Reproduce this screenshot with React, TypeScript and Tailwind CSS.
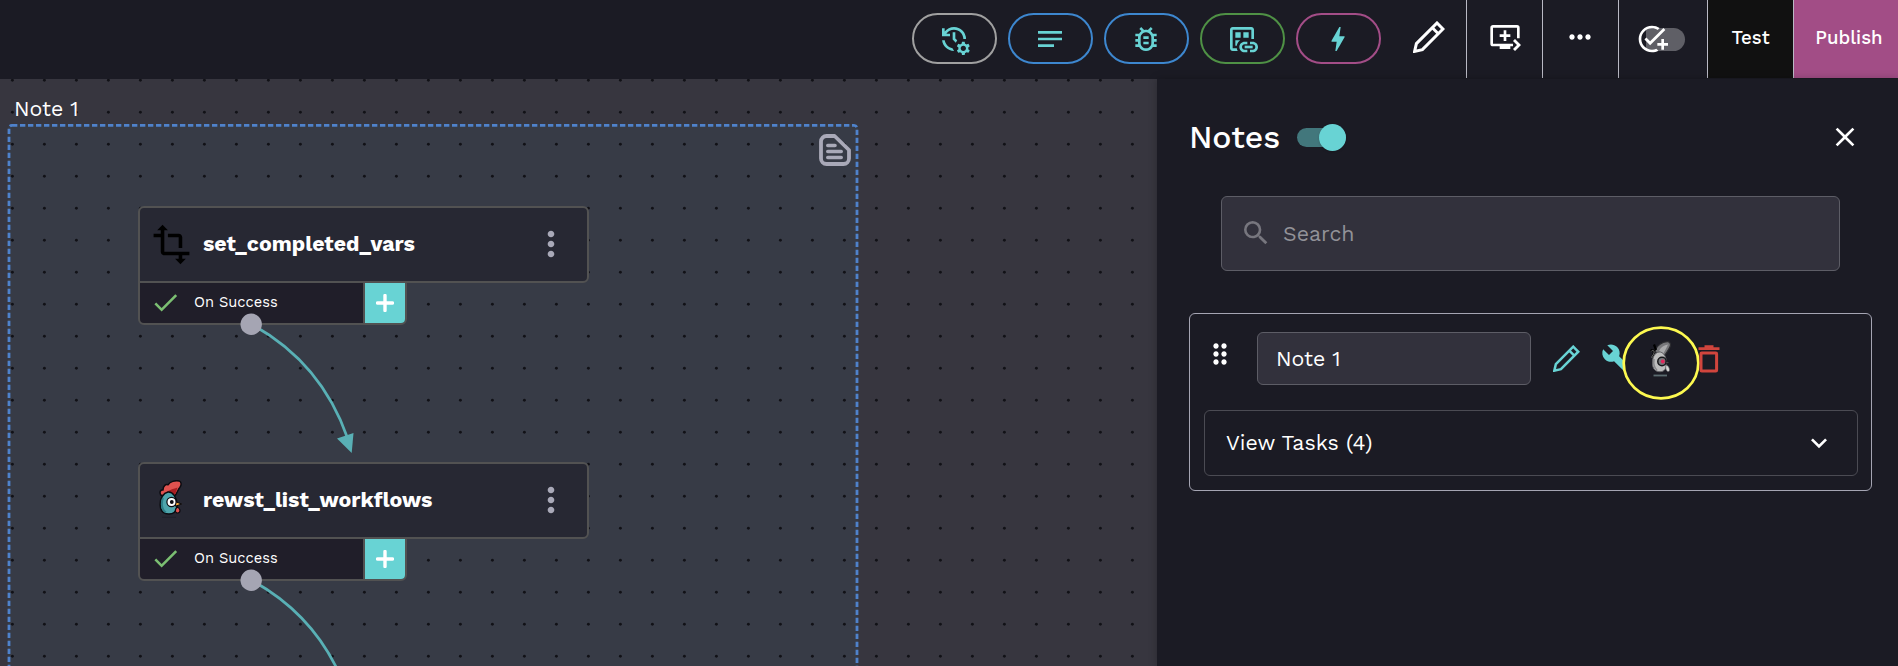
import type { ReactNode } from "react";
import {
  MdBolt,
  MdBuild,
  MdCheck,
  MdClose,
  MdDragIndicator,
  MdExpandMore,
  MdManageHistory,
  MdMoreHoriz,
  MdMoreVert,
  MdNotes,
  MdOutlineAddTask,
  MdOutlineBugReport,
  MdOutlineDatasetLinked,
  MdQueuePlayNext,
  MdSearch,
  MdTransform,
} from "react-icons/md";

function PencilIcon({ className }: { className: string }) {
  return (
    <svg viewBox="0 0 32 32" className={className} fill="none" stroke="currentColor" strokeWidth="3" strokeLinejoin="miter">
      <path d="M1.6 30.4 3.4 22.6 24 2 30 8 9.4 28.6Z" />
      <path d="m19.3 6.7 6 6" />
    </svg>
  );
}

function TrashIcon({ className }: { className: string }) {
  return (
    <svg viewBox="0 0 22 28" className={className} fill="none" stroke="currentColor">
      <path d="M0.5 3.7h21M6.5 1.7h9" strokeWidth="2.8" />
      <rect x="3" y="8" width="15.6" height="18" rx="0.8" strokeWidth="3" />
    </svg>
  );
}

function NoteIcon({ className }: { className: string }) {
  return (
    <svg viewBox="0 0 32 32" className={className} fill="none" stroke="currentColor" strokeWidth="3.8" strokeLinecap="round">
      <path d="M7.5 2H15.6L30 16V24.5a5.5 5.5 0 0 1-5.5 5.5H7.5A5.5 5.5 0 0 1 2 24.5v-17A5.5 5.5 0 0 1 7.5 2Z" strokeLinejoin="round" />
      <path d="M8.8 11.5h7.2M8.8 17.5h13.4M8.8 23.5h13.4" strokeWidth="3.6" />
    </svg>
  );
}

function RoosterIcon({ className }: { className: string }) {
  return (
    <svg viewBox="0 0 24 38" className={className} strokeLinejoin="round">
      <path d="M1.7 15C0 11.500 2 9.500 4 10c0-4 2.500-6 5-5.200C11 1.500 16 .2 20 .9c2.800.8 2.600 4.500.8 6.600C19 9.500 18.500 12 16.500 15L10 17.500Z" fill="#e0524f" stroke="#0b0b10" strokeWidth="1.500" />
      <path d="M7 13c2-3 6-3.500 11.500-5.500C17.500 10.500 17 13 15.500 15Z" fill="#a81f22" />
      <path d="M9 12c-4.500 1-8 6-7.800 13 .2 6 3.800 9 8.800 9 5 0 8-3 8-9 0-7-4-13.500-9-13Z" fill="#4ea5ac" stroke="#0b0b10" strokeWidth="1.500" />
      <path d="M4 18c-2 5-1.500 12 3 14.500" stroke="#2f7f88" strokeWidth="2" fill="none" />
      <path d="M16 21.500 22.700 24l-6.200 2.200Z" fill="#f0a63a" stroke="#0b0b10" strokeWidth="1" />
      <path d="M18.300 27c3 1.200 3.800 5.500.7 6-3.200.3-3.400-3.800-.7-6Z" fill="#e0524f" stroke="#0b0b10" strokeWidth="1.200" />
      <circle cx="12.500" cy="22" r="4.600" fill="#fff" stroke="#0b0b10" strokeWidth="1.200" />
      <circle cx="12.800" cy="22" r="1.900" fill="#0b0b10" />
      <path d="M3 37.300h14" stroke="#20202b" strokeWidth="1" />
    </svg>
  );
}

function GreyRoosterIcon({ className }: { className: string }) {
  return (
    <svg viewBox="0 0 22 37" className={className} strokeLinejoin="round">
      <path d="M5 11C6 4 13 .5 18 .7c3 .5 3 4 1.500 6C18 9.500 17 11 15 14Z" fill="#77777a" stroke="#2c2c30" strokeWidth="1.200" />
      <path d="M9 10c2-4 5-6 9-6.500-1.500 3.500-3 6-4.500 9Z" fill="#a9a9ab" />
      <path d="M4 3.500 6 9M1 10c1-1.500 3-1 3 1s-2 3-1 6" fill="none" stroke="#000" strokeWidth="2.200" />
      <path d="M1.500 10c1.500-1.500 3 0 2.500 2S1.500 14.500 2 17" fill="none" stroke="#8b8b8e" strokeWidth=".8" />
      <path d="M9 11c-4.500 1-6.500 5-6.500 11 0 6 3 8.700 7.500 8.700 4.300 0 6.500-3 6.500-8.500C16.500 16 13.500 10.500 9 11Z" fill="#bdbdbe" stroke="#66666a" strokeWidth="1" />
      <path d="M4 18c-.8 5 .5 9 3 11" fill="none" stroke="#88888b" strokeWidth="1.600" />
      <path d="M16 24c3 .5 4.500 5.500 2.800 6.500-2.500.5-3.500-3-2.800-6.500Z" fill="#d7d7d7" stroke="#55555a" strokeWidth=".6" />
      <circle cx="12" cy="20.500" r="4.200" fill="#77777b" stroke="#17171b" strokeWidth="1.500" />
      <circle cx="12.800" cy="20.500" r="1.900" fill="#e3265c" />
      <path d="M16 20.300 20 21.500l-4 1.500Z" fill="#55555a" stroke="#17171b" strokeWidth=".7" />
      <path d="M3.500 34.500h13.500" stroke="#5b6b70" strokeWidth="1.800" />
    </svg>
  );
}

function Pill({ border, children }: { border: string; children: ReactNode }) {
  return (
    <button className={`flex h-[51px] w-[85px] items-center justify-center rounded-full border-2 pr-px text-[32px] text-[#68d3d4] ${border}`}>
      {children}
    </button>
  );
}

function TopBar() {
  return (
    <header className="flex h-[79px] shrink-0 items-start justify-end">
      <div className="flex gap-[11px] pt-[13px] pr-[19px]">
        <Pill border="border-[#a0a0a0]"><MdManageHistory /></Pill>
        <Pill border="border-[#3d87cf]"><MdNotes /></Pill>
        <Pill border="border-[#3d87cf]"><MdOutlineBugReport /></Pill>
        <Pill border="border-[#4f9145]"><MdOutlineDatasetLinked /></Pill>
        <Pill border="border-[#a34d87]"><MdBolt /></Pill>
      </div>
      <div className="flex h-[78px] text-[32px] text-white">
        <button className="flex w-[66px] items-center pb-[4px] pl-[13px]">
          <PencilIcon className="size-8" />
        </button>
        <button className="flex w-[76px] items-center border-l border-[#b9b9c4] pb-[4px] pl-[22px]">
          <MdQueuePlayNext />
        </button>
        <button className="flex w-[76px] items-center justify-center border-l border-[#b9b9c4] pr-[2px] pb-[4px]">
          <MdMoreHoriz />
        </button>
        <div className="flex w-[89px] items-center border-l border-[#b9b9c4] pl-[17px]">
          <div className="flex h-[23px] w-[49px] items-center rounded-full bg-linear-to-r from-transparent from-20% to-[#5f5f66] to-20%">
            <MdOutlineAddTask className="shrink-0" />
          </div>
        </div>
        <button className="w-[86px] border-l border-[#b9b9c4] bg-[#111111] pb-[2px] text-[18.670px] font-medium">
          Test
        </button>
        <button className="w-[105px] border-l border-[#b9b9c4] bg-[#a24d86] pb-[2px] pl-[6px] text-[18.670px] font-medium">
          Publish
        </button>
      </div>
    </header>
  );
}

function TaskNode({ place, icon, name }: { place: string; icon: ReactNode; name: string }) {
  return (
    <div className={`absolute left-[138px] w-[451px] ${place}`}>
      <div className="relative flex h-[77px] items-center rounded-md rounded-bl-none border-2 border-[#525252] bg-[#272833]">
        <div className="flex w-[63px] items-center pb-px pl-[10px]">{icon}</div>
        <div className="flex-1 pb-[2px] text-[21.330px] font-bold text-white">{name}</div>
        <MdMoreVert className="mr-[16px] mb-px text-[40px] text-[#a9a9b8]" />
      </div>
      <div className="relative -mt-[2px] flex h-[44px] w-[269px] overflow-hidden rounded-b-md border-2 border-[#525252] bg-[#201e29]">
        <div className="flex flex-1 items-center pb-px">
          <MdCheck className="ml-[10px] text-[31px] text-[#7bbf72]" />
          <span className="ml-[13px] pb-px text-[14.670px] text-white">On Success</span>
        </div>
        <div className="flex w-[42px] items-center justify-center border-l-2 border-[#525252] bg-[#68d3d4]">
          <svg viewBox="0 0 18 18" className="size-[18px]" stroke="#fff" strokeWidth="3.400" strokeLinecap="round">
            <path d="M9 1.500v15M1.500 9h15" />
          </svg>
        </div>
      </div>
    </div>
  );
}

function Canvas() {
  return (
    <main className="relative w-[1157px] shrink-0 overflow-hidden bg-[#37363f]">
      <div className="absolute top-[45px] left-[8px] h-[640px] w-[850px] rounded bg-[#373b46]" />
      <svg className="absolute inset-0 h-full w-full">
        <defs>
          <pattern id="dots" x="-4" y="-15" width="32" height="32" patternUnits="userSpaceOnUse">
            <circle cx="16.400" cy="16.300" r="1.450" fill="#111116" />
          </pattern>
        </defs>
        <rect width="1157" height="587" fill="url(#dots)" />
        <rect x="9" y="46.300" width="848" height="660" rx="3" fill="none" stroke="#4f82cb" strokeWidth="2.800" strokeDasharray="5.330 2.670" />
      </svg>
      <div className="absolute top-[17px] left-[14px] text-[21.330px] leading-[26px] text-white">Note 1</div>
      <NoteIcon className="absolute top-[55px] left-[818.500px] size-8 text-[#a9a9b8]" />
      <TaskNode place="top-[127px]" name="set_completed_vars" icon={<MdTransform className="text-[43px] text-black" />} />
      <TaskNode place="top-[383px]" name="rewst_list_workflows" icon={<RoosterIcon className="mb-[2px] ml-[9px] h-[38px] w-[24px]" />} />
      <svg className="absolute inset-0 h-full w-full" fill="none" stroke="#59b0b5" strokeWidth="2.700">
        <path d="M251 245Q321 283 347.500 359" />
        <path d="M251 501Q321 539 347.500 615" />
        <path d="M337 359.500 353.500 354 351.700 374Z" fill="#59b0b5" stroke="none" />
        <circle cx="251.200" cy="245.300" r="10.700" fill="#a5a5b3" stroke="none" />
        <circle cx="251.200" cy="501.300" r="10.700" fill="#a5a5b3" stroke="none" />
      </svg>
    </main>
  );
}

function NotesPanel() {
  return (
    <aside className="relative flex-1 bg-[#1b1b24] pt-[39px] pr-[26px] pl-8 text-white shadow-[0_0_8px_rgba(0,0,0,0.25)]">
      <div className="flex h-[38px] items-center">
        <h2 className="w-[108px] text-[32px] font-medium">Notes</h2>
        <div className="flex h-[19px] w-[49px] items-center justify-end rounded-full bg-[#42777c]">
          <span className="size-[27px] shrink-0 rounded-full bg-[#68d3d4] shadow" />
        </div>
        <MdClose className="mr-[11px] ml-auto text-[32px]" />
      </div>
      <div className="mt-[40px] mr-8 ml-8 flex h-[75px] items-center rounded-md border border-[#5d5d66] bg-[#32313c] pl-[18px]">
        <MdSearch className="mb-[2px] text-[32px] text-[#77767e]" />
        <span className="ml-[11px] text-[21.330px] text-[#929298]">Search</span>
      </div>
      <section className="mt-[42px] h-[178px] rounded-md border border-[#a5a5b3] pt-[18px] pr-[13px] pl-[14px]">
        <div className="flex h-[53px] items-center">
          <MdDragIndicator className="-mt-[9px] text-[32px]" />
          <div className="ml-[21px] flex h-[53px] w-[274px] items-center rounded-md border border-[#5d5d66] bg-[#32313c] pl-[18px] text-[21.330px]">
            Note 1
          </div>
          <PencilIcon className="ml-[21.500px] size-[27px] text-[#68d3d4]" />
          <MdBuild className="ml-[21.500px] text-[32px] text-[#68d3d4]" />
          <svg viewBox="0 0 78 74" className="mt-[8px] -ml-[11px] h-[74px] w-[78px] shrink-0">
            <ellipse cx="39" cy="37" rx="37.300" ry="35.300" fill="#1b1b24" stroke="#fdf950" strokeWidth="2.700" />
            <svg x="28" y="15" width="22" height="37">
              <GreyRoosterIcon className="h-[37px] w-[22px]" />
            </svg>
          </svg>
          <TrashIcon className="-ml-[2px] h-[28px] w-[22px] text-[#d1453d]" />
        </div>
        <div className="mt-[25px] flex h-[66px] items-center justify-between rounded-md border border-[#4b4b53] pr-[22px] pl-[21px]">
          <span className="text-[21.330px]">View Tasks (4)</span>
          <MdExpandMore className="text-[32px]" />
        </div>
      </section>
    </aside>
  );
}

export default function App() {
  return (
    <div className="flex h-[666px] w-[1898px] flex-col overflow-hidden bg-[#1b1b24] font-['Work_Sans',Inter,sans-serif]">
      <TopBar />
      <div className="flex min-h-0 flex-1">
        <Canvas />
        <NotesPanel />
      </div>
    </div>
  );
}
